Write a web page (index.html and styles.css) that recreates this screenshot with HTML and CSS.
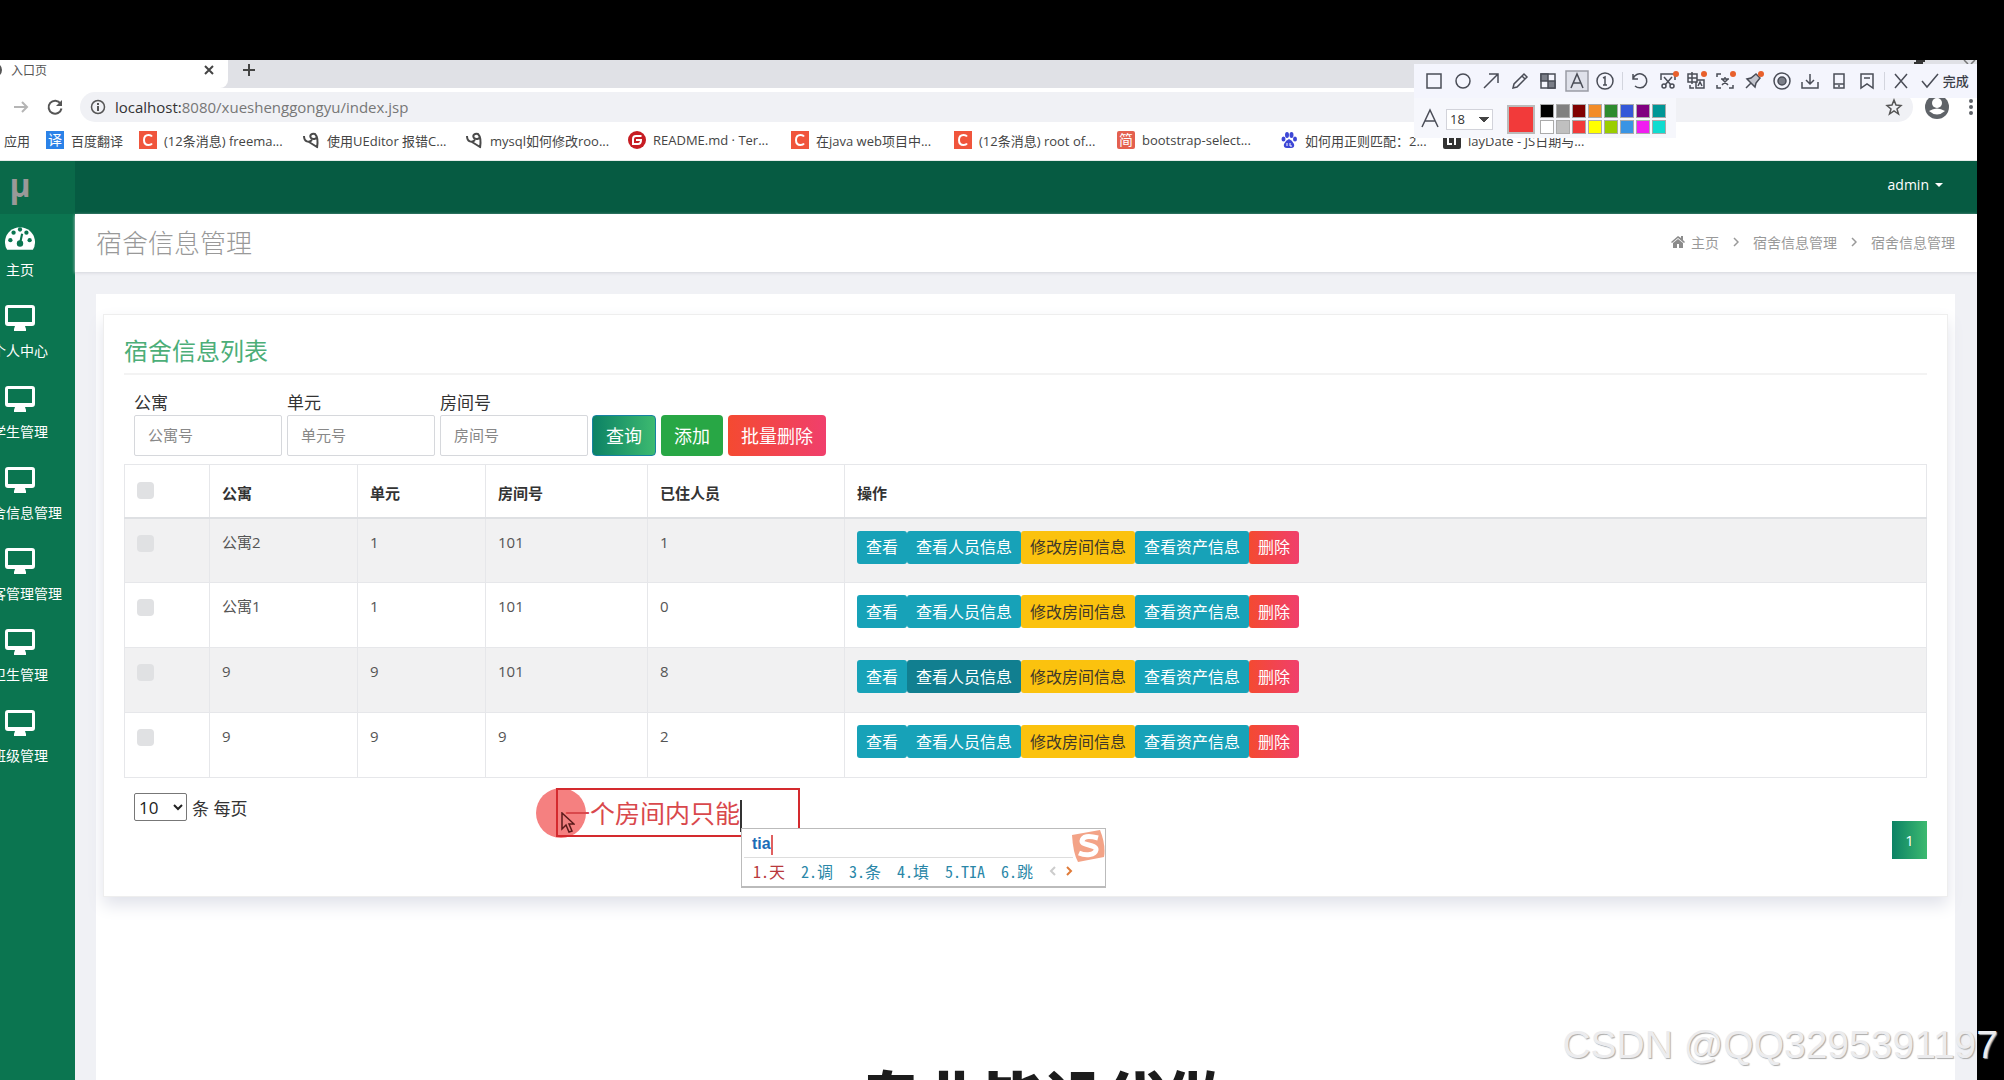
FILE: index.html
```html
<!DOCTYPE html>
<html lang="zh-CN">
<head>
<meta charset="utf-8">
<title>入口页</title>
<meta name="viewport" content="width=device-width, initial-scale=1">
<link rel="stylesheet" href="styles.css">
</head>
<body>
<svg class="defs" aria-hidden="true">
  <symbol id="monitor" viewBox="0 0 30 26"><path fill="currentColor" d="M3 0h24a3 3 0 0 1 3 3v15a3 3 0 0 1-3 3h-7l1 3v2H9v-2l1-3H3a3 3 0 0 1-3-3V3a3 3 0 0 1 3-3zm0 3v14h24V3z"/></symbol>
  <symbol id="clip" viewBox="0 0 18 18"><path fill="none" stroke="#4a4a4a" stroke-width="2" d="M2 5c0 6 5 7 8 4M15 17c1-6 1-11-2-14-3-1-6 1-4 4 2 2 5 1 6-1M7 11l8 5"/></symbol>
  <symbol id="csdn" viewBox="0 0 18 18"><rect width="18" height="18" fill="#f0553c"/><path fill="none" stroke="#fff" stroke-width="2" d="M13 5.500Q12 4 9.500 4 5 4 5 9t4.500 5q2.500 0 3.500-1.500"/></symbol>
</svg>

<div class="browser">
  <div class="tabs">
    <div class="tab"><svg class="favicon" viewBox="0 0 14 14"><circle cx="7" cy="7" r="6" fill="none" stroke="#555" stroke-width="2"/></svg><span class="tab-title">入口页</span>
      <button class="tab-close" aria-label="关闭"><svg viewBox="0 0 10 10"><path d="M1 1l8 8M9 1l-8 8" stroke="#444" stroke-width="2"/></svg></button></div>
    <button class="tab-new" aria-label="新标签页"><svg viewBox="0 0 14 14"><path d="M7 1v12M1 7h12" stroke="#444" stroke-width="2"/></svg></button>
    <svg class="win" viewBox="0 0 64 4"><path d="M3 0h9v2H3zM1 2h9v2H1z" fill="#333"/><path d="M51 0l4 4M62 0l-4 4" stroke="#777" stroke-width="1.500"/></svg>
  </div>
  <div class="nav">
    <button class="nav-btn" aria-label="前进"><svg viewBox="0 0 18 18"><path d="M2 9h13M10 4l5 5-5 5" fill="none" stroke="#b5b5b5" stroke-width="2"/></svg></button>
    <button class="nav-btn" aria-label="刷新"><svg viewBox="0 0 18 18"><path d="M14.500 5.500A6.500 6.500 0 1 0 15.500 10.500" fill="none" stroke="#555" stroke-width="2"/><path d="M16 2v6h-6z" fill="#555"/></svg></button>
    <div class="url">
      <svg class="info" viewBox="0 0 16 16"><circle cx="8" cy="8" r="6.500" fill="none" stroke="#555" stroke-width="1.500"/><path d="M8 7v5M8 4v2" stroke="#555" stroke-width="2"/></svg>
      <span><span class="host">localhost:</span>8080/xueshenggongyu/index.jsp</span>
      <svg class="star" viewBox="0 0 18 18"><path d="M9 2l2 5 5 .500-4 3.500 1.500 5L9 13l-4.500 3L6 11 2 7.500 7 7z" fill="none" stroke="#555" stroke-width="1.500"/></svg>
    </div>
    <svg class="avatar" viewBox="0 0 24 24"><circle cx="12" cy="12" r="12" fill="#5f6368"/><circle cx="12" cy="8" r="5" fill="#fff"/><path d="M4 16q8-5 16 0-8 7-16 0z" fill="#fff"/></svg>
    <svg class="dots" viewBox="0 0 4 18"><circle cx="2" cy="3" r="2"/><circle cx="2" cy="9" r="2"/><circle cx="2" cy="15" r="2"/></svg>
  </div>
  <div class="bookmarks">
    <a href="#" class="bm bm-apps">应用</a>
    <a href="#" class="bm bm-fy"><span class="tile blue">译</span>百度翻译</a>
    <a href="#" class="bm"><svg><use href="#csdn"/></svg>(12条消息) freema...</a>
    <a href="#" class="bm"><svg><use href="#clip"/></svg>使用UEditor 报错C...</a>
    <a href="#" class="bm"><svg><use href="#clip"/></svg>mysql如何修改roo...</a>
    <a href="#" class="bm"><svg viewBox="0 0 18 18"><circle cx="9" cy="9" r="9" fill="#c71d23"/><path d="M13.500 5H8Q5 5 5 8v5h5q3 0 3-4H8" fill="none" stroke="#fff" stroke-width="2"/></svg>README.md · Ter...</a>
    <a href="#" class="bm"><svg><use href="#csdn"/></svg>在java web项目中...</a>
    <a href="#" class="bm"><svg><use href="#csdn"/></svg>(12条消息) root of...</a>
    <a href="#" class="bm"><span class="tile coral">简</span>bootstrap-select...</a>
    <a href="#" class="bm"><svg viewBox="0 0 18 18" fill="#3d47d6"><ellipse cx="3.500" cy="8" rx="2" ry="2.500"/><ellipse cx="7" cy="4" rx="2" ry="3"/><ellipse cx="11.500" cy="4" rx="2" ry="3"/><ellipse cx="15" cy="8" rx="2" ry="2.500"/><path d="M9 8q3 1 5 5 1 4-3 4H7q-4 0-3-4 2-4 5-5z"/><path d="M7 12v3M10 12v3h2" fill="none" stroke="#fff"/></svg>如何用正则匹配：2...</a>
    <a href="#" class="bm"><svg viewBox="0 0 18 18"><rect width="18" height="18" rx="2" fill="#333"/><path d="M5 4v9h4M12 6v8" fill="none" stroke="#fff" stroke-width="2"/></svg>layDate - JS日期与...</a>
  </div>

  <div class="app">
    <aside class="side">
      <a href="#" class="logo">μ</a>
      <a href="#" class="item"><svg class="gauge" viewBox="0 0 28 24"><path fill="#fff" d="M2 24a14 14 0 1 1 24 0z"/><g fill="#0b7550"><circle cx="5" cy="15" r="2"/><circle cx="8" cy="8" r="2"/><circle cx="14" cy="5" r="2"/><circle cx="20" cy="8" r="2"/><circle cx="23" cy="15" r="2"/><circle cx="14" cy="18" r="3"/></g><path d="M14 18l2-9" stroke="#0b7550" stroke-width="2"/></svg>主页</a>
      <a href="#" class="item"><svg><use href="#monitor"/></svg>个人中心</a>
      <a href="#" class="item"><svg><use href="#monitor"/></svg>学生管理</a>
      <a href="#" class="item"><svg><use href="#monitor"/></svg>宿舍信息管理</a>
      <a href="#" class="item"><svg><use href="#monitor"/></svg>访客管理管理</a>
      <a href="#" class="item"><svg><use href="#monitor"/></svg>卫生管理</a>
      <a href="#" class="item"><svg><use href="#monitor"/></svg>班级管理</a>
    </aside>
    <div class="main">
      <header class="top"><button class="user">admin<span class="caret"></span></button></header>
      <div class="titlebar">
        <h1>宿舍信息管理</h1>
        <nav class="crumbs">
          <svg class="home" viewBox="0 0 14 13"><path fill="#8c8c8c" d="M7 1L0 7l1 1 6-5 6 5 1-1-2-2V1h-2v2zM2 8v5h4V9h2v4h4V8L7 4z"/></svg>
          <a href="#">主页</a><svg class="sep" viewBox="0 0 6 10"><path d="M1 1l4 4-4 4" fill="none" stroke="#999" stroke-width="1.500"/></svg>
          <a href="#">宿舍信息管理</a><svg class="sep" viewBox="0 0 6 10"><path d="M1 1l4 4-4 4" fill="none" stroke="#999" stroke-width="1.500"/></svg>
          <a href="#">宿舍信息管理</a>
        </nav>
      </div>
      <div class="content">
        <section class="card">
          <h2>宿舍信息列表</h2>
          <form class="search">
            <div class="field"><label for="f1">公寓</label><input id="f1" placeholder="公寓号"></div>
            <div class="field"><label for="f2">单元</label><input id="f2" placeholder="单元号"></div>
            <div class="field"><label for="f3">房间号</label><input id="f3" placeholder="房间号"></div>
            <div class="actions">
              <button type="button" class="btn query">查询</button>
              <button type="button" class="btn add">添加</button>
              <button type="button" class="btn danger">批量删除</button>
            </div>
          </form>
          <table>
            <colgroup><col class="c1"><col class="c2"><col class="c3"><col class="c4"><col class="c5"><col></colgroup>
            <thead><tr><th><input type="checkbox" aria-label="全选"></th><th>公寓</th><th>单元</th><th>房间号</th><th>已住人员</th><th>操作</th></tr></thead>
            <tbody>
              <tr><td><input type="checkbox" aria-label="选择"></td><td>公寓2</td><td>1</td><td>101</td><td>1</td><td><div class="ops"><button class="sm info-b">查看</button><button class="sm info-b">查看人员信息</button><button class="sm warn">修改房间信息</button><button class="sm info-b">查看资产信息</button><button class="sm danger">删除</button></div></td></tr>
              <tr><td><input type="checkbox" aria-label="选择"></td><td>公寓1</td><td>1</td><td>101</td><td>0</td><td><div class="ops"><button class="sm info-b">查看</button><button class="sm info-b">查看人员信息</button><button class="sm warn">修改房间信息</button><button class="sm info-b">查看资产信息</button><button class="sm danger">删除</button></div></td></tr>
              <tr><td><input type="checkbox" aria-label="选择"></td><td>9</td><td>9</td><td>101</td><td>8</td><td><div class="ops"><button class="sm info-b">查看</button><button class="sm info-b pressed">查看人员信息</button><button class="sm warn">修改房间信息</button><button class="sm info-b">查看资产信息</button><button class="sm danger">删除</button></div></td></tr>
              <tr><td><input type="checkbox" aria-label="选择"></td><td>9</td><td>9</td><td>9</td><td>2</td><td><div class="ops"><button class="sm info-b">查看</button><button class="sm info-b">查看人员信息</button><button class="sm warn">修改房间信息</button><button class="sm info-b">查看资产信息</button><button class="sm danger">删除</button></div></td></tr>
            </tbody>
          </table>
          <div class="foot">
            <div class="size"><select id="size"><option>10</option></select><label for="size">条 每页</label></div>
            <button class="page">1</button>
          </div>
        </section>
      </div>
    </div>
  </div>
</div>

<div class="capture">
  <div class="tools">
    <svg viewBox="0 0 24 24"><path d="M5 5h14v14H5z"/></svg>
    <svg viewBox="0 0 24 24"><circle cx="12" cy="12" r="7"/></svg>
    <svg viewBox="0 0 24 24"><path d="M5 19L19 5M10 5h9v9"/></svg>
    <svg viewBox="0 0 24 24"><path d="M5 19l1-4L16 5l3 3L9 18zM14 7l3 3"/></svg>
    <svg viewBox="0 0 24 24"><path d="M5 5h14v14H5z"/><path d="M5 5h7v7H5zM12 12h7v7h-7z" fill="#7b7e88"/></svg>
    <svg viewBox="0 0 24 24"><path d="M1 2h22v20H1z" fill="#dfe1ea" stroke="#9a9ca5"/><path d="M6 19l6-14 6 14M8 14h8"/></svg>
    <svg viewBox="0 0 24 24"><circle cx="12" cy="12" r="8"/><path d="M10 9l2-1v8M10 16h4"/></svg>
    <span class="bar"></span>
    <svg viewBox="0 0 24 24"><path d="M6 5v5h5M6 10a7 7 0 1 1 2 7"/></svg>
    <svg viewBox="0 0 24 24"><path d="M5 11V5h14v6M8 8l7 8M16 8l-7 8"/><circle cx="8" cy="17" r="2"/><circle cx="16" cy="17" r="2"/><circle class="dot" cx="20" cy="5" r="3"/></svg>
    <svg viewBox="0 0 24 24"><path d="M4 5h9v8H4zM4 9h9M8 3v12M13 11h7v8h-8v-6M14 17l2-4 2 4M6 16v3h4"/><circle class="dot" cx="20" cy="5" r="3"/></svg>
    <svg viewBox="0 0 24 24"><path d="M4 8V5h4M4 16v3h4M16 19h4v-3M8 10h8M12 8v2M9 16l6-6M9 10l6 6"/><circle class="dot" cx="20" cy="5" r="3"/></svg>
    <svg viewBox="0 0 24 24"><path d="M5 19l5-5M6 10l8 8 1-4 4-5-4-4-5 4z" fill="#c3c5ce"/><circle class="dot" cx="20" cy="5" r="3"/></svg>
    <svg viewBox="0 0 24 24"><circle cx="12" cy="12" r="8"/><circle cx="12" cy="12" r="4" fill="#7b7e88"/></svg>
    <svg viewBox="0 0 24 24"><path d="M4 13v6h16v-6M12 5v10M8 11l4 4 4-4"/></svg>
    <svg viewBox="0 0 24 24"><path d="M7 5h10v14H7zM7 15h10M11 17h2"/></svg>
    <svg viewBox="0 0 24 24"><path d="M6 5h12v14l-6-4-6 4zM9 9h6"/></svg>
    <span class="bar"></span>
    <svg viewBox="0 0 24 24"><path d="M6 5l12 14M18 5L6 19"/></svg>
    <button class="done"><svg viewBox="0 0 24 24"><path d="M4 12l5 6L20 5"/></svg>完成</button>
  </div>
  <div class="palette">
    <svg viewBox="0 0 24 24"><path d="M4 20l8-17 8 17M7 14h10"/></svg>
    <select aria-label="字号"><option>18</option></select>
    <span class="current"></span>
    <div class="swatches">
      <i class="s1"></i><i class="s2"></i><i class="s3"></i><i class="s4"></i><i class="s5"></i><i class="s6"></i><i class="s7"></i><i class="s8"></i>
      <i class="s9"></i><i class="s10"></i><i class="s11"></i><i class="s12"></i><i class="s13"></i><i class="s14"></i><i class="s15"></i><i class="s16"></i>
    </div>
  </div>
</div>

<div class="halo"></div>
<div class="note">一个房间内只能</div>
<svg class="pointer" viewBox="0 0 14 22"><path d="M1 1v16l4-4 3 7 3-1-3-7h5z" fill="#f08080" stroke="#5a1a1a" stroke-width="1.500"/></svg>
<div class="ime">
  <div class="typed">tia</div>
  <div class="cands"><span class="first">1.天</span><span>2.调</span><span>3.条</span><span>4.填</span><span>5.TIA</span><span>6.跳</span>
    <svg viewBox="0 0 24 12"><path d="M6 2L2 6l4 4" fill="none" stroke="#ccc" stroke-width="2"/><path d="M18 2l4 4-4 4" fill="none" stroke="#e07b39" stroke-width="2"/></svg></div>
  <svg class="sogou" viewBox="0 0 34 34"><path d="M1 6l28-5q6 15 4 27L7 33Q2 24 1 6z" fill="#f3a387"/><path d="M27 9Q12 5 11 12c0 5 15 3 14 9-1 5-10 6-17 3" fill="none" stroke="#fff" stroke-width="5"/></svg>
</div>
<div class="banner"><span>专业毕设代做</span></div>
<div class="mark">CSDN @QQ3295391197</div>
</body>
</html>
```

FILE: styles.css
```css
* { box-sizing: border-box; }
body {
  margin: 0;
  min-height: 100vh;
  padding: 60px 27px 0 0;
  background: #000;
  display: flex;
  overflow: hidden;
  position: relative;
  font-family: "Open Sans", "Noto Sans CJK SC", sans-serif;
  font-size: 15px;
  color: #333;
}
button, input, select { font: inherit; }
button { border: 0; background: none; padding: 0; color: inherit; }
a { color: inherit; text-decoration: none; }
.defs { position: absolute; width: 0; height: 0; }
.browser { flex: 1; min-width: 0; display: flex; flex-direction: column; background: #fff; overflow: hidden; }

/* browser chrome */
.tabs { height: 28px; background: #e0e1e6; display: flex; align-items: center; }
.tab { width: 228px; height: 28px; background: #fff; border-radius: 0 0 8px 0; display: flex; align-items: center; padding: 0 14px 8px 0; font-size: 12px; color: #555; }
.favicon { width: 14px; height: 14px; margin-left: -12px; }
.tab-title { flex: 1; margin-left: 9px; }
.tab-close svg { width: 10px; height: 10px; display: block; }
.tab-new { margin-left: 14px; padding-bottom: 8px; }
.tab-new svg { width: 14px; height: 14px; display: block; }
.win { width: 64px; height: 4px; margin-left: auto; align-self: flex-start; }
.nav { height: 38px; display: flex; align-items: center; padding: 0 4px 0 12px; }
.nav-btn { width: 18px; height: 18px; margin-right: 16px; }
.nav-btn svg { width: 18px; height: 18px; display: block; }
.url { flex: 1; height: 30px; border-radius: 15px; background: #f0f1f5; display: flex; align-items: center; padding: 0 10px; color: #777; font-size: 15px; }
.info { width: 16px; height: 16px; margin-right: 9px; }
.host { color: #333; }
.star { width: 18px; height: 18px; margin-left: auto; }
.avatar { width: 24px; height: 24px; margin: 0 20px 0 12px; }
.dots { width: 4px; height: 18px; fill: #5f6368; }
.bookmarks { height: 35px; display: flex; align-items: center; padding-bottom: 6px; color: #444; font-size: 13px; white-space: nowrap; border-bottom: 1px solid #e6ebe9; }
.bm { width: 163px; flex: none; display: flex; align-items: center; gap: 7px; }
.bm-apps { width: 46px; padding-left: 4px; }
.bm-fy { width: 93px; }
.bm svg { width: 18px; height: 18px; flex: none; }
.tile { width: 18px; height: 18px; font-size: 14px; line-height: 18px; text-align: center; color: #fff; }
.blue { background: #2b82e8; }
.coral { background: #e4604f; border-radius: 2px; }

/* application */
.app { flex: 1; display: flex; }
.side { width: 110px; flex: none; margin-left: -35px; background: #0b7550; color: #fff; display: flex; flex-direction: column; }
.logo { height: 53px; background: #0a6949; color: #999; font-size: 32px; font-weight: 700; line-height: 48px; text-align: center; margin-bottom: 10px; }
.item { height: 81px; display: flex; flex-direction: column; align-items: center; font-size: 14px; line-height: 20px; white-space: nowrap; gap: 10px; }
.item svg { width: 30px; height: 26px; color: #fff; }
.main { flex: 1; min-width: 0; display: flex; flex-direction: column; background: #f0f1f5; }
.top { height: 53px; background: #065b42; display: flex; justify-content: flex-end; align-items: center; padding: 0 34px 6px 0; }
.user { display: flex; align-items: center; gap: 6px; color: #fff; font-size: 14px; font-weight: 500; }
.caret { border: 4px solid transparent; border-top-color: #fff; border-bottom: 0; }
.titlebar { height: 58px; background: #fff; box-shadow: 0 1px 3px #d4d6dc; display: flex; justify-content: space-between; align-items: center; padding: 0 22px 3px 21px; }
h1 { margin: 0; font-size: 26px; font-weight: 300; color: #999; }
.crumbs { display: flex; align-items: center; font-size: 14px; color: #999; }
.home { width: 14px; height: 13px; margin-right: 6px; }
.sep { width: 6px; height: 10px; margin: 0 14px; }
.content { flex: 1; margin: 22px 22px 0 21px; padding: 20px 7px; background: #fff; }
.card { border: 1px solid #eee; background: #fff; box-shadow: 0 8px 16px #e0e2ea; padding: 18px 20px 37px 20px; }
h2 { margin: 0; height: 42px; font-size: 24px; line-height: 36px; font-weight: 400; color: #4cae78; border-bottom: 2px solid #f3f3f3; }
.search { display: flex; align-items: flex-end; padding: 16px 10px 8px; gap: 5px; }
.field { width: 148px; display: flex; flex-direction: column; }
.field label { font-size: 17px; line-height: 24px; }
.field input { width: 100%; height: 41px; border: 1px solid #d6d8dc; border-radius: 2px; padding: 0 13px 2px; font-size: 15px; background: #fff; }
.field input::placeholder { color: #888; }
.actions { display: flex; gap: 5px; margin-left: -1px; }
.btn { height: 41px; padding: 0 13px 2px; border-radius: 4px; color: #fff; font-size: 18px; }
.query { background: linear-gradient(90deg, #0c8265, #3dba70); border: 1px solid #1682a0; padding: 0 13px 2px; }
.add { background: #28a745; }
.danger { background: linear-gradient(90deg, #f44a31, #f03f6c); color: #fff; }
table { width: 100%; table-layout: fixed; border-collapse: collapse; font-size: 15px; }
.c1 { width: 85px; } .c2 { width: 148px; } .c3 { width: 128px; } .c4 { width: 162px; } .c5 { width: 197px; }
th, td { border: 1px solid #e6e7ea; text-align: left; padding: 0 12px; }
th { height: 53px; font-weight: 700; padding-top: 3px; border-bottom: 2px solid #dee0e3; }
td { height: 65px; padding-top: 12px; vertical-align: top; line-height: 22px; color: #555; }
tbody tr:nth-child(odd) { background: #f1f1f2; }
input[type=checkbox] { appearance: none; display: block; width: 17px; height: 17px; margin: 4px 0; border-radius: 4px; background: #e0e1e3; }
th input[type=checkbox] { margin: 0 0 4px; }
.ops { display: flex; margin-bottom: 14px; }
.sm { height: 33px; padding: 0 9px; border-radius: 3px; font-size: 16px; white-space: nowrap; }
.info-b { background: #17a2b8; color: #fff; }
.pressed { background: #117f90; }
.warn { background: #fbc20e; color: #40382a; }
.foot { display: flex; justify-content: space-between; align-items: flex-start; padding: 15px 0 0 10px; font-size: 17px; }
.size { display: flex; align-items: center; gap: 5px; }
.size select { width: 53px; height: 28px; border: 1px solid #777; border-radius: 2px; background: #fff; color: #222; }
.page { width: 35px; height: 38px; margin-top: 28px; background: linear-gradient(90deg, #0c8265, #3dba70); color: #fff; font-size: 15px; }

/* screen-capture toolbar floating over the browser */
.capture { position: absolute; top: 64px; right: 27px; width: 563px; color: #3b3e48; }
.tools { height: 34px; background: #f4f5fd; display: flex; align-items: center; justify-content: space-between; padding: 0 8px; }
.capture svg { width: 24px; height: 24px; flex: none; fill: none; stroke: #4a4d57; stroke-width: 1.500; }
.capture .dot { fill: #e8602c; stroke: none; }
.bar { width: 1px; height: 18px; background: #d3d5de; }
.done { display: flex; align-items: center; gap: 1px; font-size: 13px; font-weight: 500; padding-bottom: 1px; }
.palette { width: 262px; height: 40px; background: #f6f7fc; display: flex; align-items: center; padding: 2px 0 0 4px; }
.palette select {
  appearance: none; width: 47px; height: 21px; margin: 0 14px 0 4px; padding: 0 3px;
  border: 1px solid #d2d3da; border-radius: 0; color: #333; font-size: 13px; line-height: 17px;
  background: conic-gradient(from -40deg at 50% 100%, #444 80deg, transparent 0) 32px 7px / 9px 6px no-repeat, #fff;
  background: linear-gradient(to bottom left, #444 50%, transparent 50%) 32px 7px / 5px 6px no-repeat, linear-gradient(to bottom right, #444 50%, transparent 50%) 37px 7px / 5px 6px no-repeat, #fff;
}
.current { width: 28px; height: 29px; border: 2px solid #bbb; background: #f23a3a; margin-right: 5px; }
.swatches { display: grid; grid-template-columns: repeat(8, 14px); gap: 2px; }
.swatches i { height: 14px; border: 1px solid #aaa; }
.s1 { background: #000; } .s2 { background: #808080; } .s3 { background: #800000; } .s4 { background: #f28c28; }
.s5 { background: #2e8b2e; } .s6 { background: #3458d8; } .s7 { background: #800080; } .s8 { background: #009696; }
.s9 { background: #fff; } .s10 { background: #c0c0c0; } .s11 { background: #f23a3a; } .s12 { background: #ff0; }
.s13 { background: #9acd00; } .s14 { background: #3a94e4; } .s15 { background: #f01cf0; } .s16 { background: #10dcd0; }

/* annotation and input-method window */
.halo { position: absolute; left: 536px; top: 788px; width: 50px; height: 50px; border-radius: 50%; background: #f58080; }
.note { position: absolute; left: 556px; top: 788px; width: 244px; height: 49px; border: 2px solid #d42a2e; padding-left: 7px; font-size: 25px; line-height: 46px; color: #d9484c; }
.note::after { content: ""; display: inline-block; width: 2px; height: 32px; background: #333; vertical-align: middle; }
.pointer { position: absolute; left: 561px; top: 812px; width: 14px; height: 22px; }
.ime { position: absolute; left: 741px; top: 828px; width: 365px; height: 60px; background: #fff; border: 1px solid #bbb; border-bottom-width: 2px; }
.typed { height: 29px; margin: 0 32px 0 2px; padding-left: 8px; border-bottom: 1px solid #ddd; font: 700 16px/29px "Liberation Sans", sans-serif; color: #1c6cb8; }
.typed::after { content: ""; display: inline-block; width: 2px; height: 20px; background: #e06060; vertical-align: middle; }
.cands { display: flex; align-items: center; gap: 16px; padding-left: 11px; height: 26px; font: 16px "Noto Sans Mono CJK SC", "Liberation Mono", "Noto Sans CJK SC", monospace; color: #2a87a8; white-space: nowrap; }
.cands .first { color: #b8383c; }
.cands svg { width: 24px; height: 12px; }
.sogou { position: absolute; right: 0; top: 0; width: 34px; height: 34px; }

.banner { position: absolute; left: 0; right: 0; bottom: 0; height: 24px; padding-left: 860px; overflow: hidden; font-size: 61px; line-height: 88px; font-weight: 900; color: #1c1c1c; white-space: nowrap; }
.banner span { display: block; }
.mark { position: absolute; right: 6px; bottom: 10px; font: 39px/50px "Liberation Sans", sans-serif; color: #ececee; text-shadow: 1px 1px 1px #aaa; white-space: nowrap; }
```
